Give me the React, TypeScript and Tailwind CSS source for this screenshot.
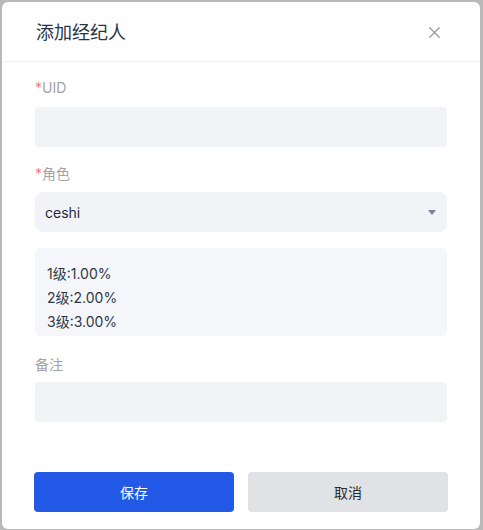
import { X } from "lucide-react";

const font = { fontFamily: "Inter, 'Noto Sans CJK SC', sans-serif" };

const levels = ["1级:1.00%", "2级:2.00%", "3级:3.00%"];

export default function App() {
  return (
    <div className="w-[483px] h-[530px] bg-[#b9b9b9] pt-[2px] pl-[2px]" style={font}>
      <div className="w-[478px] h-[527px] bg-white rounded-[6px] flex flex-col">
        <div className="h-[60px] flex items-center justify-between pl-[34px] pr-[36px] border-b border-[#f0f1f3]">
          <h1 className="text-[18px] text-[#2a3445] pt-[2px]">添加经纪人</h1>
          <X className="w-[19px] h-[19px] text-[#9a9a9a] mt-[2px]" strokeWidth={1.5} />
        </div>

        <div className="px-[33px] pt-[16px] flex flex-col">
          <label className="text-[14px] leading-[20px] text-[#a3a3a3]">
            <span className="text-[#f57c7c]">*</span>UID
          </label>
          <div className="mt-[9px] h-[40px] rounded-[4px] bg-[#f2f3f7]" />

          <label className="mt-[17px] text-[14px] leading-[20px] text-[#a3a3a3]">
            <span className="text-[#f57c7c]">*</span>角色
          </label>
          <div className="mt-[8px] h-[40px] rounded-[8px] bg-[#f2f3f7] flex items-center justify-between pl-[10px] pr-[11px]">
            <span className="text-[14px] text-[#1f2a3b]">ceshi</span>
            <svg width="8" height="5" viewBox="0 0 8 5">
              <path d="M0 0h8L4 5z" fill="#7b8293" />
            </svg>
          </div>

          <div className="mt-[16px] h-[88px] rounded-[6px] bg-[#f5f6f9] pl-[12px] pt-[14px]">
            {levels.map((l) => (
              <div key={l} className="text-[14px] leading-[24px] text-[#2f3847]">{l}</div>
            ))}
          </div>

          <label className="mt-[19px] text-[14px] leading-[20px] text-[#a3a3a3]">备注</label>
          <div className="mt-[7px] h-[40px] rounded-[4px] bg-[#f2f3f7]" />

          <div className="mt-[50px] flex justify-between">
            <button className="w-[200px] h-[40px] rounded-[4px] bg-[#2259e6] text-white text-[14px] -ml-[1px]">保存</button>
            <button className="w-[200px] h-[40px] rounded-[4px] bg-[#e1e2e6] text-[#2a2a2a] text-[14px] -mr-[1px]">取消</button>
          </div>
        </div>
      </div>
    </div>
  );
}
